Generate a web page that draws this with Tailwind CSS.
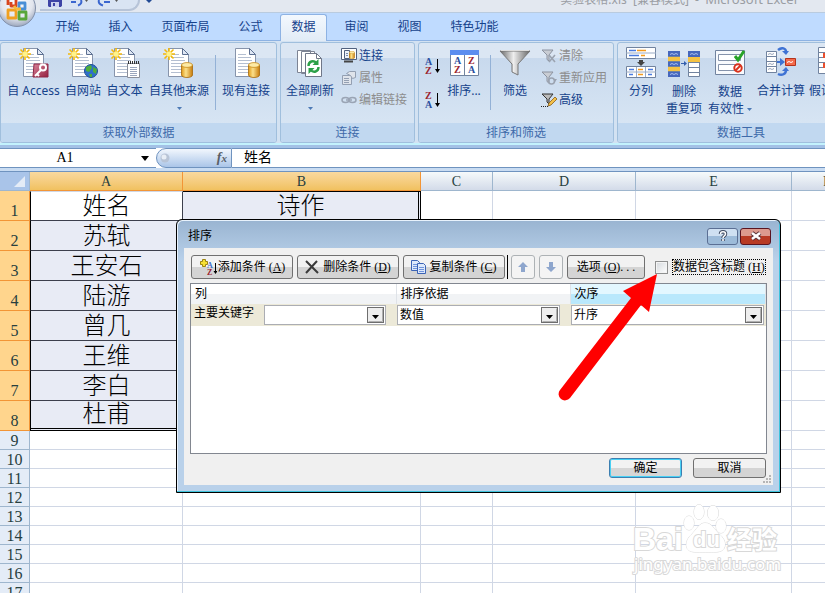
<!DOCTYPE html>
<html lang="zh-CN">
<head>
<meta charset="utf-8">
<meta name="viewport" content="width=device-width, initial-scale=1">
<title>Microsoft Excel</title>
<script src="https://cdn.jsdelivr.net/npm/@tailwindcss/browser@4"></script>
</head>
<body class="relative flex h-screen flex-col overflow-hidden bg-white font-['Noto_Sans','Noto_Sans_CJK_SC',sans-serif] text-[12px] leading-4 text-[#15428b]">

<svg class="absolute size-0" aria-hidden="true">
  <defs>
    <linearGradient id="gold" x1="0" x2="1"><stop offset="0" stop-color="#e09a18"/><stop offset=".4" stop-color="#fbe08a"/><stop offset="1" stop-color="#c87c0c"/></linearGradient>
    <linearGradient id="metal" x1="0" x2="1"><stop offset="0" stop-color="#666"/><stop offset=".45" stop-color="#eee"/><stop offset="1" stop-color="#666"/></linearGradient>
    <linearGradient id="red" x1="0" y1="0" x2="1" y2="1"><stop offset="0" stop-color="#d9849b"/><stop offset="1" stop-color="#94203f"/></linearGradient>
    <radialGradient id="orb" cx=".5" cy=".35" r=".65"><stop offset="0" stop-color="#fff"/><stop offset=".65" stop-color="#e3e6ee"/><stop offset="1" stop-color="#9da8bd"/></radialGradient>
    <symbol id="doc" viewBox="0 0 32 32">
      <path d="M5.500 1.500h14l6 6v22h-20z" fill="#fff" stroke="#8794ab"/>
      <path d="M19.500 1.500v6h6z" fill="#dfe7f4" stroke="#5c6f91"/>
      <path d="M8 7.500h8M8 10.500h13M8 13.500h14M8 16.500h14M8 19.500h14M8 22.500h14M8 25.500h14" stroke="#b4bfd1"/>
    </symbol>
    <symbol id="spark" viewBox="0 0 12 12">
      <path d="M6 0v12M0 6h12M1.500 1.500l9 9M10.500 1.500l-9 9" stroke="#f3b90c" stroke-width="1.600"/>
      <circle cx="6" cy="6" r="2.600" fill="#fff38a"/>
    </symbol>
    <symbol id="drum" viewBox="0 0 12 16">
      <path d="M.5 3v10c0 1.500 2.500 2.500 5.500 2.500s5.500-1 5.500-2.500V3z" fill="url(#gold)" stroke="#a8690a" stroke-width=".8"/>
      <ellipse cx="6" cy="3" rx="5.500" ry="2.400" fill="#fdeaa5" stroke="#c78a1c" stroke-width=".8"/>
    </symbol>
    <symbol id="funnel" viewBox="0 0 16 16">
      <path d="M1 2h11L8 7v6l-2-1.500V7z" fill="#c9cdd4" stroke="#8c93a0"/>
    </symbol>
    <symbol id="caret" viewBox="0 0 5 3"><path d="M0 0h5L2.500 3z" fill="#4d7ab5"/></symbol>
    <symbol id="drop" viewBox="0 0 17 16">
      <rect x=".5" y=".5" width="16" height="15" fill="#eee" stroke="#6e6e6e"/>
      <path d="M1.500 14.500h14v-13" fill="none" stroke="#b0b0b0"/>
      <path d="M5 8h7l-3.500 4z" fill="#000"/>
    </symbol>
  </defs>
</svg>

<!-- Title bar -->
<header class="relative h-[13px] shrink-0 bg-[#e3e8f0]">
  <div class="flex h-full items-end justify-between overflow-hidden border-b border-[#b9cbdf] pr-7">
    <div class="ml-10 flex h-[11px] w-[100px] items-start gap-2 self-start rounded-br-[14px] border-r-2 border-b-2 border-[#b7c4d8] bg-[#d9e4f3] pl-2">
      <button aria-label="保存"><svg width="14" height="7" viewBox="0 0 14 7"><path d="M0 0h14v5.500L13 7H1L0 6z" fill="#3c43a6"/><path d="M3 2h8v5H3z" fill="#ccd2ef"/><path d="M5 3h2v3H5z" fill="#3c43a6"/></svg></button>
      <button aria-label="撤消"><svg width="18" height="7" viewBox="0 0 18 7"><path d="M1 2h5M8 5.500c3-1 4-3 3-5.500" fill="none" stroke="#3a66cf" stroke-width="2"/><path d="M15 0h3l-1.500 2z" fill="#555"/></svg></button>
      <button aria-label="恢复"><svg width="24" height="7" viewBox="0 0 24 7"><path d="M7 5.500C4 4.500 2 3 3 0M8 2h6" fill="none" stroke="#3a66cf" stroke-width="2"/><path d="M19 0h3l-1.500 2z" fill="#555"/></svg></button>
    </div>
    <svg class="mr-auto ml-1.5 self-start" width="7" height="3"><path d="M0 0h6L3 3z" fill="#224a94"/></svg>
    <h1 class="mb-1 leading-4 whitespace-pre text-[#9a9da3]">实验表格.xls  [兼容模式]  -  <span class="text-[13px]">Microsoft Excel</span></h1>
  </div>
  <button aria-label="Office 按钮" class="absolute -top-3 -left-px z-10">
    <svg width="38" height="40" viewBox="0 0 38 40">
      <circle cx="18" cy="20" r="18.500" fill="url(#orb)" stroke="#8290aa"/>
      <g fill="none" stroke-width="2.800" stroke-linejoin="round">
        <path d="M9 17v-7h8v8h-5v-4" stroke="#d8441c"/>
        <path d="M20 15h6v6h-6z" stroke="#4a8fd6"/>
        <path d="M9 22h8v8H9z" stroke="#f0a020"/>
        <path d="M20 24h7v7h-7z" stroke="#58a63a"/>
        <path d="M15 18l2 3M17 21h5" stroke="#f4b93a"/>
      </g>
    </svg>
  </button>
</header>

<!-- Ribbon tabs -->
<nav class="flex h-[27px] shrink-0 items-stretch bg-[#bfdbff] pl-[41px]">
  <a href="#" class="w-[53px] pt-1.5 text-center">开始</a>
  <a href="#" class="w-[53px] pt-1.5 text-center">插入</a>
  <a href="#" class="w-[77px] pt-1.5 text-center">页面布局</a>
  <a href="#" class="w-[53px] pt-1.5 text-center">公式</a>
  <a href="#" aria-current="page" class="z-10 mx-[3px] mt-px -mb-px w-[47px] rounded-t-[3px] border border-b-0 border-[#8db2e3] bg-linear-to-b from-[#f3f8fe] to-[#e1ebf6] pt-1 text-center">数据</a>
  <a href="#" class="w-[53px] pt-1.5 text-center">审阅</a>
  <a href="#" class="w-[53px] pt-1.5 text-center">视图</a>
  <a href="#" class="w-[77px] pt-1.5 text-center">特色功能</a>
</nav>

<!-- Ribbon -->
<div class="flex h-[105px] shrink-0 gap-[3px] border-t border-b-2 border-t-[#8db2e3] border-b-[#c3f2fd] bg-[#d3e2f2] pt-px">
  <section class="flex w-[277px] shrink-0 flex-col overflow-hidden rounded-[3px] border border-[#a0bfdd] bg-linear-to-b from-[#dbe6f3] from-15% via-[#c8d9ed] via-15% to-[#dbe8f5]">
    <div class="flex flex-1 pt-1 pl-[3px]">
      <button class="flex w-[59px] shrink-0 flex-col items-center gap-1 whitespace-nowrap">
        <svg width="32" height="32"><use href="#doc" width="32" height="32"/><use href="#spark" x="1" y="1" width="12" height="12"/><path d="M16 17h14v13H15z" fill="url(#red)" stroke="#8f2745"/><circle cx="25" cy="20.500" r="3" fill="none" stroke="#fff" stroke-width="2"/><path d="M23 23l-6 6M19 27l2 2" stroke="#fff" stroke-width="2"/></svg>自 Access</button>
      <button class="flex w-[40px] shrink-0 flex-col items-center gap-1 whitespace-nowrap">
        <svg width="32" height="32"><use href="#doc" width="32" height="32"/><use href="#spark" x="1" y="1" width="12" height="12"/><circle cx="24" cy="24" r="6.500" fill="#2f6fc9" stroke="#1f4f94"/><path d="M19 20l5-2 1 3-3 4-3-1zM26 20l4 2-1 5-3-2zM22 27l3 0 0 3-2 0z" fill="#4fae3b"/></svg>自网站</button>
      <button class="flex w-[43px] shrink-0 flex-col items-center gap-1 whitespace-nowrap">
        <svg width="32" height="32"><use href="#doc" width="32" height="32"/><use href="#spark" x="1" y="1" width="12" height="12"/><path d="M18.500 16.500h12v14h-12z" fill="#fff" stroke="#8a8f9a"/><path d="M19 15.500h11" stroke="#333" stroke-dasharray="1 1" stroke-width="3"/><path d="M21 20.500h7M21 22.500h7M21 24.500h7M21 26.500h7M21 28.500h7" stroke="#9aa6bd"/></svg>自文本</button>
      <button class="flex w-[66px] shrink-0 flex-col items-center gap-1 whitespace-nowrap">
        <svg width="32" height="32"><use href="#doc" width="32" height="32"/><use href="#spark" x="0" y="1" width="12" height="12"/><use href="#drum" x="18" y="15" width="12" height="16"/></svg>自其他来源<svg class="mt-1" width="5" height="3"><use href="#caret" width="5" height="3"/></svg></button>
      <span class="mx-[3px] mt-2 h-[55px] w-px bg-[#93b1d6]"></span>
      <button class="flex w-[54px] shrink-0 flex-col items-center gap-1 whitespace-nowrap">
        <svg width="32" height="32"><use href="#doc" width="32" height="32"/><use href="#drum" x="18" y="15" width="12" height="16"/></svg>现有连接</button>
    </div>
    <h2 class="h-[19px] bg-[#c1d8f0] text-center leading-[19px] text-[#3e6aaa]">获取外部数据</h2>
  </section>

  <section class="flex w-[135px] shrink-0 flex-col overflow-hidden rounded-[3px] border border-[#a0bfdd] bg-linear-to-b from-[#dbe6f3] from-15% via-[#c8d9ed] via-15% to-[#dbe8f5]">
    <div class="flex flex-1">
      <button class="flex w-[58px] shrink-0 flex-col items-center gap-1 pt-1 whitespace-nowrap">
        <svg width="32" height="32"><path d="M3.500 3.500h13v22h-13zM7.500 4.500h13v22h-13z" fill="#fff" stroke="#7d8494"/><path d="M11.500 6.500h11l5 5v18h-16z" fill="#fff" stroke="#6f7788"/><path d="M22.500 6.500v5h5" fill="none" stroke="#6f7788"/><path d="M14.500 19c0-5 5-6 8-3M24.500 20c0 5-5 6-8 3" fill="none" stroke="#2ca048" stroke-width="2.400"/><path d="M24.500 12v6h-6zM14.500 27v-6h6z" fill="#2ca048"/></svg>全部刷新<svg class="mt-1" width="5" height="3"><use href="#caret" width="5" height="3"/></svg></button>
      <div class="flex flex-col pt-0.5 pl-0.5">
        <button class="flex h-[22px] items-center gap-0.5 whitespace-nowrap"><svg width="16" height="16"><path d="M.5.500h15v11h-15z" fill="#fff" stroke="#51617e"/><path d="M3.500 2.500h5v8h-5z" fill="#edf2fa" stroke="#51617e"/><path d="M5 5.500h2M5 7.500h2" stroke="#7a8bab"/><use href="#drum" x="8" y="3" width="6" height="8"/><path d="M3 13.500h9" stroke="#444" stroke-width="2"/></svg>连接</button>
        <button disabled class="flex h-[22px] items-center gap-0.5 whitespace-nowrap text-[#8d8d8d]"><svg width="16" height="16" fill="#dfe4eb" stroke="#94a0b2"><path d="M1.500 5.500h9v9h-9z"/><path d="M3 8.500h5M3 10.500h5M3 12.500h5"/><path d="M5.500 3.500l3-2h6v6l-3 1-2-3z"/></svg>属性</button>
        <button disabled class="flex h-[22px] items-center gap-0.5 whitespace-nowrap text-[#8d8d8d]"><svg width="16" height="16" fill="none" stroke="#9aa4b4" stroke-width="1.500"><ellipse cx="4.500" cy="8" rx="3.500" ry="2.500"/><ellipse cx="11.500" cy="8" rx="3.500" ry="2.500"/><path d="M5 8h6"/></svg>编辑链接</button>
      </div>
    </div>
    <h2 class="h-[19px] bg-[#c1d8f0] text-center leading-[19px] text-[#3e6aaa]">连接</h2>
  </section>

  <section class="flex w-[196px] shrink-0 flex-col overflow-hidden rounded-[3px] border border-[#a0bfdd] bg-linear-to-b from-[#dbe6f3] from-15% via-[#c8d9ed] via-15% to-[#dbe8f5]">
    <div class="flex flex-1">
      <div class="flex w-[24px] shrink-0 flex-col items-end gap-4 pt-[14px]">
        <button aria-label="升序"><svg width="18" height="18" font-family="Liberation Serif" font-size="10" font-weight="700"><text x="0" y="8" fill="#2b4f9e">A</text><text x="0" y="17" fill="#9b2430">Z</text><path d="M12.500 2v11" stroke="#000"/><path d="M10 12h5l-2.500 4z"/></svg></button>
        <button aria-label="降序"><svg width="18" height="18" font-family="Liberation Serif" font-size="10" font-weight="700"><text x="0" y="8" fill="#9b2430">Z</text><text x="0" y="17" fill="#2b4f9e">A</text><path d="M12.500 2v11" stroke="#000"/><path d="M10 12h5l-2.500 4z"/></svg></button>
      </div>
      <button class="flex w-[42px] shrink-0 flex-col items-center gap-1 pt-1 whitespace-nowrap">
        <svg width="32" height="32" font-family="Liberation Serif" font-size="10" font-weight="700"><path d="M2.500 7.500h28v21h-28z" fill="#fff" stroke="#71839f"/><path d="M2 3h29v5H2z" fill="#5b8def"/><path d="M16.500 8v20" stroke="#71839f"/><text x="6" y="17" fill="#2b4f9e">A</text><text x="6" y="26" fill="#9b2430">Z</text><text x="20" y="17" fill="#9b2430">Z</text><text x="20" y="26" fill="#2b4f9e">A</text></svg>排序...</button>
      <span class="ml-[5px] mt-3 h-[55px] w-px bg-[#93b1d6]"></span>
      <button class="flex w-[48px] shrink-0 flex-col items-center gap-1 pt-1 whitespace-nowrap">
        <svg width="32" height="32"><path d="M1 4h30L19 17v11l-6-3v-8z" fill="url(#metal)" stroke="#777"/><path d="M2 3.500h28" stroke="#ddd"/></svg>筛选</button>
      <div class="flex flex-col pt-0.5 pl-0.5">
        <button disabled class="flex h-[22px] items-center gap-0.5 whitespace-nowrap text-[#8d8d8d]"><svg width="16" height="16"><use href="#funnel" width="16" height="16"/><path d="M8 7l6 7M14 7l-6 7" stroke="#9ba3b0" stroke-width="1.600"/></svg>清除</button>
        <button disabled class="flex h-[22px] items-center gap-0.5 whitespace-nowrap text-[#8d8d8d]"><svg width="16" height="16"><use href="#funnel" width="16" height="16"/><circle cx="10.500" cy="11" r="3" fill="none" stroke="#9ba3b0" stroke-width="1.600"/><path d="M12 9h4l-2 3z" fill="#9ba3b0"/></svg>重新应用</button>
        <button class="flex h-[22px] items-center gap-0.5 whitespace-nowrap"><svg width="16" height="16"><path d="M1 2h11L8 7v5L6 10V7z" fill="#bbb" stroke="#333"/><path d="M7 14l1-3 6-6 2 2-6 6z" fill="#f3c04a" stroke="#8a5d17" stroke-width=".8"/><path d="M0 14.500h7" stroke="#222" stroke-dasharray="1 1"/></svg>高级</button>
      </div>
    </div>
    <h2 class="h-[19px] bg-[#c1d8f0] text-center leading-[19px] text-[#3e6aaa]">排序和筛选</h2>
  </section>

  <section class="flex w-[248px] shrink-0 flex-col overflow-hidden rounded-[3px] border border-[#a0bfdd] bg-linear-to-b from-[#dbe6f3] from-15% via-[#c8d9ed] via-15% to-[#dbe8f5]">
    <div class="flex flex-1 pt-1 pl-0.5">
      <button class="flex w-[42px] shrink-0 flex-col items-center gap-1 whitespace-nowrap">
        <svg width="32" height="32"><path d="M1.500.500h29v11h-29zM1.500 19.500h29v11h-29z" fill="#fff" stroke="#71839f"/><path d="M1 6h30M1 25h30M11.500 20v10M20.500 20v10" stroke="#9aabc5"/><path d="M4 3.500h7M4 8.500h10M4 22.500h5M23 22.500h5M4 27.500h4M23 27.500h4" stroke="#4a7be0" stroke-width="1.500"/><path d="M12 3.500h9M16 8.500h4M13 22.500h5M13 27.500h5" stroke="#f39a1e" stroke-width="1.500"/><path d="M14 13h4v2h2l-4 4-4-4h2z" fill="#444"/></svg>分列</button>
      <button class="flex w-[44px] shrink-0 flex-col items-center gap-1 leading-[17px] whitespace-nowrap">
        <svg width="32" height="32"><path d="M0 4h12v26H0z" fill="#4667bd"/><path d="M0 10h12v5H0zM0 20h12v5H0z" fill="#f5c243"/><path d="M20.500 4.500h11v25h-11z" fill="#fff" stroke="#71839f"/><path d="M20 4h12v6H20z" fill="#4667bd"/><path d="M20 10h12v5H20z" fill="#f5c243"/><path d="M0 9.500h12M0 14.500h12M0 19.500h12M0 24.500h12M20 15.500h12M20 20.500h12M20 25.500h12" stroke="#71839f"/><path d="M2 7.500l2-1 2 1 2-1 2 1M2 17.500l2-1 2 1 2-1 2 1M2 27.500l2-1 2 1 2-1 2 1M22 7.500l2-1 2 1 2-1 2 1" stroke="#aac0ee" fill="none"/><path d="M13 16.500h4" stroke="#345fae"/><path d="M16 14l3 2.500-3 2.500z" fill="#345fae"/></svg><span>删除<br>重复项</span></button>
      <button class="flex w-[48px] shrink-0 flex-col items-center gap-1 leading-[17px] whitespace-nowrap">
        <svg width="32" height="32"><path d="M1.500 3.500h29v24h-29z" fill="#f8fafd" stroke="#71839f"/><path d="M4.500 7.500h22v6h-22zM4.500 17.500h22v6h-22z" fill="#fff" stroke="#8593ab"/><path d="M21 9l3 4 6-9" fill="none" stroke="#27a327" stroke-width="3"/><circle cx="24" cy="21" r="3.700" fill="#fff" stroke="#d8321c" stroke-width="2"/><path d="M21.500 23.500l5-5" stroke="#d8321c" stroke-width="2"/></svg><span>数据<br>有效性 <svg class="inline align-middle" width="5" height="3"><use href="#caret" width="5" height="3"/></svg></span></button>
      <button class="flex w-[54px] shrink-0 flex-col items-center gap-1 whitespace-nowrap">
        <svg width="32" height="32"><path d="M1.500 4.500h10v21h-10z" fill="#fff" stroke="#71839f"/><path d="M1 9.500h10M1 14.500h10M1 19.500h10" stroke="#71839f"/><path d="M3 7.500l2-1 2 1 2-1M3 17.500l2-1 2 1 2-1M3 22.500l2-1 2 1 2-1" stroke="#9aa6bb" fill="none"/><path d="M20.500 11.500h10v7h-10z" fill="#f4694a" stroke="#b5331b"/><path d="M22 15.500l2-1 2 1 2-1" stroke="#fff" fill="none"/><path d="M13 3c4-3 8-2 8 2M13 27c4 2 8 0 8-4" fill="none" stroke="#3f73d4" stroke-width="2.500"/><path d="M17 4h7l-3 4zM17 24h7l-3-4z" fill="#3f73d4"/><path d="M12 14h3v-3l5 4-5 4v-3h-3z" fill="#3f73d4"/></svg>合并计算</button>
      <button class="flex w-[50px] shrink-0 flex-col items-center gap-1 whitespace-nowrap">
        <svg width="32" height="32"><path d="M1.500.500h28v26h-28z" fill="#fff" stroke="#71839f"/><path d="M1 5.500h28M1 10.500h28M1 15.500h28M1 20.500h28M10.500 0v26M20.500 0v26" stroke="#71839f"/><path d="M6 6h8v5H6zM6 16h8v5H6z" fill="#ea4f2e"/></svg>假设分析</button>
    </div>
    <h2 class="h-[19px] bg-[#c1d8f0] text-center leading-[19px] text-[#3e6aaa]">数据工具</h2>
  </section>
</div>

<!-- Formula bar -->
<div class="flex h-[26px] shrink-0 border-t-3 border-b-3 border-t-[#a3c1e6] border-b-[#c9dcf2] bg-white font-['Liberation_Serif','Noto_Sans_CJK_SC',serif] text-[14px] text-black">
  <div class="flex w-[156px] items-center border-y border-[#6f93bf]">
    <input aria-label="名称框" value="A1" class="w-[130px] bg-transparent text-center leading-4 outline-none">
    <svg class="ml-[11px]" width="8" height="5"><path d="M0 0h8L4 5z"/></svg>
  </div>
  <div class="flex w-[76px] items-center justify-between rounded-l-full border border-[#6f93bf] bg-linear-to-b from-[#f2f7fd] to-[#aac5e8] pr-1">
    <svg width="14" height="14"><circle cx="8" cy="7" r="4.500" fill="#b8c4d6"/><circle cx="7" cy="6" r="2.500" fill="#e8eef6"/></svg>
    <button class="font-bold text-[#5a5f68] italic" aria-label="插入函数">f<span class="text-[11px]">x</span></button>
  </div>
  <input aria-label="编辑栏" value="姓名" class="min-w-0 flex-1 border-y border-[#6f93bf] bg-white pl-3 outline-none">
</div>

<!-- Worksheet -->
<main class="min-h-0 flex-1 overflow-hidden border-t border-[#6f93bf]">
  <table class="w-[863px] table-fixed border-separate border-spacing-0 font-['Liberation_Serif','Noto_Sans_CJK_SC',serif] text-[16px] leading-[17px] text-[#273f3f] [&_td]:border-r [&_td]:border-b [&_td]:border-[#d0d7e5] [&_td]:p-0 [&_th]:border-r [&_th]:border-b [&_th]:p-0 [&_th]:font-normal">
    <colgroup><col class="w-[30px]"><col class="w-[153px]"><col class="w-[238px]"><col class="w-[72px]"><col class="w-[143px]"><col class="w-[156px]"><col></colgroup>
    <thead>
      <tr class="h-[19px] text-[14px] [&>th]:border-[#9eb6ce] [&>th]:bg-linear-to-b [&>th]:from-[#f6fafb] [&>th]:to-[#d3dbe9]">
        <th aria-label="全选" class="from-[#a9c4e9]! to-[#a9c4e9]!"><svg class="ml-auto mr-1" width="11" height="11"><path d="M11 0v11H0z" fill="#e4ecf7"/></svg></th>
        <th class="border-[#f29536]! from-[#f9d99f]! to-[#f1c15f]!">A</th><th class="border-[#f29536]! from-[#f9d99f]! to-[#f1c15f]!">B</th><th>C</th><th>D</th><th>E</th><th>F</th>
      </tr>
    </thead>
    <tbody class="[&_th]:border-[#f29536] [&_th]:bg-[#ffd58d] [&_th]:pt-2.5 [&_tr]:h-[30px] [&_td:nth-child(2)]:border-r-[#3c3f4c] [&_td:nth-child(2)]:border-b-[#3c3f4c] [&_td:nth-child(2)]:border-l [&_td:nth-child(2)]:border-l-black [&_td:nth-child(2)]:bg-[#e8ebf5] [&_td:nth-child(2)]:text-center [&_td:nth-child(2)]:text-[24px] [&_td:nth-child(2)]:leading-[28px] [&_td:nth-child(2)]:font-light [&_td:nth-child(2)]:text-black [&_td:nth-child(3)]:border-r-3 [&_td:nth-child(3)]:border-double [&_td:nth-child(3)]:border-black [&_td:nth-child(3)]:bg-[#e8ebf5] [&_td:nth-child(3)]:text-center [&_td:nth-child(3)]:text-[24px] [&_td:nth-child(3)]:leading-[28px] [&_td:nth-child(3)]:font-light [&_td:nth-child(3)]:text-black">
      <tr><th>1</th><td class="border-t border-t-black bg-white!">姓名</td><td class="border-t border-t-black">诗作</td><td></td><td></td><td></td><td></td></tr>
      <tr><th>2</th><td>苏轼</td><td></td><td></td><td></td><td></td><td></td></tr>
      <tr><th>3</th><td>王安石</td><td></td><td></td><td></td><td></td><td></td></tr>
      <tr><th>4</th><td>陆游</td><td></td><td></td><td></td><td></td><td></td></tr>
      <tr><th>5</th><td>曾几</td><td></td><td></td><td></td><td></td><td></td></tr>
      <tr><th>6</th><td>王维</td><td></td><td></td><td></td><td></td><td></td></tr>
      <tr><th>7</th><td>李白</td><td></td><td></td><td></td><td></td><td></td></tr>
      <tr><th>8</th><td class="border-b-3! border-b-black! leading-[27px]! [border-bottom-style:double]!">杜甫</td><td></td><td></td><td></td><td></td><td></td></tr>
    </tbody>
    <tbody class="[&_th]:border-[#9eb6ce] [&_th]:bg-[#e4ecf7] [&_tr]:h-[19px]">
      <tr><th>9</th><td></td><td></td><td></td><td></td><td></td><td></td></tr>
      <tr><th>10</th><td></td><td></td><td></td><td></td><td></td><td></td></tr>
      <tr><th>11</th><td></td><td></td><td></td><td></td><td></td><td></td></tr>
      <tr><th>12</th><td></td><td></td><td></td><td></td><td></td><td></td></tr>
      <tr><th>13</th><td></td><td></td><td></td><td></td><td></td><td></td></tr>
      <tr><th>14</th><td></td><td></td><td></td><td></td><td></td><td></td></tr>
      <tr><th>15</th><td></td><td></td><td></td><td></td><td></td><td></td></tr>
      <tr><th>16</th><td></td><td></td><td></td><td></td><td></td><td></td></tr>
      <tr><th>17</th><td></td><td></td><td></td><td></td><td></td><td></td></tr>
    </tbody>
  </table>
</main>

<!-- Sort dialog -->
<div role="dialog" aria-labelledby="dlg-title" class="absolute top-[219px] left-[176px] z-20 flex h-[274px] w-[605px] flex-col rounded-t-[6px] border border-black bg-linear-to-b from-[#99b4d1] to-[#b9d1ea] to-15% px-[7px] pb-[7px] font-['Liberation_Serif','Noto_Sans_CJK_SC',serif] text-black shadow-[inset_-1px_-1px_0_#3fc3dc,inset_1px_1px_0_#e8f2fc]">
  <div class="flex h-7 shrink-0 items-center pl-1">
    <h2 id="dlg-title" class="flex-1 pt-1">排序</h2>
    <button aria-label="帮助" class="mt-1 mr-0.5 flex h-[17px] w-[31px] items-center justify-center rounded-[3px] border border-[#5b6f94] bg-linear-to-b from-[#cfe0f2] from-50% to-[#9dbbd9] to-50%"><svg width="10" height="12"><path d="M2.500 4c0-3 5-3 5 0 0 2-2.500 2-2.500 4M5 9v2" fill="none" stroke="#3f4b63" stroke-width="3.500"/><path d="M2.500 4c0-3 5-3 5 0 0 2-2.500 2-2.500 4M5 9v2" fill="none" stroke="#fff" stroke-width="1.600"/></svg></button>
    <button aria-label="关闭" class="mt-1 mr-0.5 flex h-[17px] w-[31px] items-center justify-center rounded-[3px] border border-[#5a1420] bg-linear-to-b from-[#dc9a8e] from-50% to-[#b83a24] to-50%"><svg width="12" height="10"><path d="M2 2l8 6M10 2L2 8" stroke="#5b3338" stroke-width="4.500"/><path d="M2 2l8 6M10 2L2 8" stroke="#fff" stroke-width="2.500"/></svg></button>
  </div>
  <form class="flex min-h-0 flex-1 flex-col bg-[#f0f0f0] px-1.5 pt-[7px]">
    <div class="flex h-6 shrink-0 items-stretch gap-1 pl-px">
      <button type="button" class="flex w-[102px] items-center justify-center gap-px rounded-[3px] border border-[#707070] bg-linear-to-b from-[#f2f2f2] from-50% to-[#d4d4d4] to-50% whitespace-nowrap"><svg width="18" height="18" font-family="Liberation Serif" font-size="8" font-weight="700"><path d="M3.500 1.500h3v2h2v3h-2v2h-3v-2h-2v-3h2z" fill="#f7e034" stroke="#9c8410"/><text x="8" y="10" fill="#3b6fc9">A</text><text x="8" y="17" fill="#9b2430">Z</text><path d="M16.500 5v10" stroke="#000"/><path d="M14.500 13h4l-2 3z"/></svg><span>添加条件 (<u>A</u>)</span></button>
      <button type="button" class="flex w-[102px] items-center justify-center gap-1 rounded-[3px] border border-[#707070] bg-linear-to-b from-[#f2f2f2] from-50% to-[#d4d4d4] to-50% whitespace-nowrap"><svg width="14" height="14"><path d="M1 1l12 12M12 1L1 13" stroke="#3a3a3a" stroke-width="2"/></svg><span>删除条件 (<u>D</u>)</span></button>
      <button type="button" class="flex w-[102px] items-center justify-center gap-0.5 rounded-[3px] border border-[#707070] bg-linear-to-b from-[#f2f2f2] from-50% to-[#d4d4d4] to-50% whitespace-nowrap"><svg width="16" height="14" stroke="#3b63b5"><path d="M.5.500h6l2 2v8h-8z" fill="#dce8fb"/><path d="M6.500 3.500h6l2 2v8h-8z" fill="#dce8fb"/><path d="M2 4.500h4M2 6.500h4M2 8.500h4M8 7.500h5M8 9.500h5M8 11.500h5" stroke="#6f93dc"/></svg><span>复制条件 (<u>C</u>)</span></button>
      <span class="-mx-0.5 w-px bg-black"></span>
      <button type="button" disabled aria-label="上移" class="ml-px flex w-6 items-center justify-center rounded-[3px] border border-[#adb2b5] bg-[#f4f4f4]"><svg width="10" height="10"><path d="M5 0l5 5H7v5H3V5H0z" fill="#8ea6cd"/></svg></button>
      <button type="button" disabled aria-label="下移" class="flex w-6 items-center justify-center rounded-[3px] border border-[#adb2b5] bg-[#f4f4f4]"><svg width="10" height="10"><path d="M5 10l5-5H7V0H3v5H0z" fill="#8ea6cd"/></svg></button>
      <button type="button" class="w-[78px] rounded-[3px] border border-[#707070] bg-linear-to-b from-[#f2f2f2] from-50% to-[#d4d4d4] to-50% whitespace-nowrap">选项 (<u>O</u>). . .</button>
      <div class="ml-1.5 flex items-center gap-1">
        <input id="has-header" type="checkbox" class="size-[13px] appearance-none border border-[#8e8f8f] bg-linear-to-br from-[#d4d8dc] to-white shadow-[inset_0_0_0_1px_#f4f4f4]">
        <label for="has-header" class="border border-dotted border-black leading-[14px] whitespace-nowrap">数据包含标题 (<u>H</u>)</label>
      </div>
    </div>
    <div class="mt-1 h-[171px] shrink-0 border border-[#828790] bg-white">
      <table class="w-full table-fixed border-collapse text-left [&_td]:p-0 [&_th]:border-r [&_th]:border-[#dfe3e8] [&_th]:px-1 [&_th]:py-0 [&_th]:font-normal">
        <colgroup><col class="w-[205px]"><col class="w-[174px]"><col></colgroup>
        <thead><tr class="h-5 bg-linear-to-b from-white from-50% to-[#f1f3f5] to-50%"><th>列</th><th>排序依据</th><th class="border-l border-l-[#56b8e6]! bg-linear-to-b from-[#e3f7ff] from-50% to-[#b9e8fc] to-50%">次序</th></tr></thead>
        <tbody>
          <tr class="h-[22px] bg-[#ece9d8]">
            <td><div class="flex items-center pl-[3px]"><label for="key" class="w-[70px] pb-1">主要关键字</label><span class="relative flex h-5 w-[122px] border border-[#abadb3] bg-white"><select id="key" class="w-full appearance-none pl-1 outline-none"><option></option><option>姓名</option><option>诗作</option></select><svg class="pointer-events-none absolute top-px right-px" width="17" height="16"><use href="#drop" width="17" height="16"/></svg></span></div></td>
            <td><span class="relative ml-px flex h-5 w-[163px] border border-[#abadb3] bg-white"><select aria-label="排序依据" class="w-full appearance-none pl-0.5 outline-none"><option>数值</option></select><svg class="pointer-events-none absolute top-px right-px" width="17" height="16"><use href="#drop" width="17" height="16"/></svg></span></td>
            <td><span class="relative mr-0.5 ml-px flex h-5 border border-[#abadb3] bg-white"><select aria-label="次序" class="w-full appearance-none pl-0.5 outline-none"><option>升序</option><option>降序</option></select><svg class="pointer-events-none absolute top-px right-px" width="17" height="16"><use href="#drop" width="17" height="16"/></svg></span></td>
          </tr>
        </tbody>
      </table>
    </div>
    <div class="mt-1 flex justify-end gap-[11px] pr-px">
      <button type="button" class="h-5 w-[73px] rounded-[3px] border border-[#3c7fb1] bg-linear-to-b from-[#f2f2f2] from-50% to-[#d6d6d6] to-50% shadow-[inset_0_0_0_1px_#48d0f4]">确定</button>
      <button type="button" class="h-5 w-[73px] rounded-[3px] border border-[#707070] bg-linear-to-b from-[#f2f2f2] from-50% to-[#d4d4d4] to-50%">取消</button>
    </div>
  </form>
  <svg class="absolute right-2 bottom-2" width="9" height="9" fill="#b5b5b5"><path d="M6 0h2v2H6zM3 3h2v2H3zM6 3h2v2H6zM0 6h2v2H0zM3 6h2v2H3zM6 6h2v2H6z"/></svg>
  <!-- Pointer to the header checkbox -->
  <svg class="pointer-events-none absolute top-[53px] left-[381px]" width="102" height="130" viewBox="558 273 102 130" aria-hidden="true"><path d="M657 274L623 291l8 7-71 92a6 6 0 0 0 10 8l71-93 8 7z" fill="#f00"/></svg>
</div>

<!-- Watermark -->
<svg class="pointer-events-none absolute top-[500px] left-[630px] z-30" width="170" height="80" fill="#fff" stroke="#d8d8d8" paint-order="stroke" aria-hidden="true">
  <ellipse cx="59" cy="23" rx="5" ry="7"/><ellipse cx="69" cy="12" rx="5" ry="7.500"/><ellipse cx="83" cy="13" rx="5.500" ry="7.500"/><ellipse cx="91" cy="26" rx="5" ry="7"/>
  <path d="M75 23c7 0 9 6 14 11 9 7 8 18-3 18-5 0-17 0-21 0-11 0-11-11-3-18 5-5 7-11 13-11z"/>
  <g stroke-width="2" font-weight="700" font-family="Liberation Sans, Noto Sans CJK SC, sans-serif">
    <text x="3" y="50" font-size="32">Bai</text>
    <text x="63" y="47" font-size="22">du</text>
    <text x="97" y="49" font-size="25">经验</text>
  </g>
  <text x="4" y="70" font-size="17" stroke-width="2" font-family="Noto Sans, sans-serif">jingyan.baidu.com</text>
</svg>
</body>
</html>
